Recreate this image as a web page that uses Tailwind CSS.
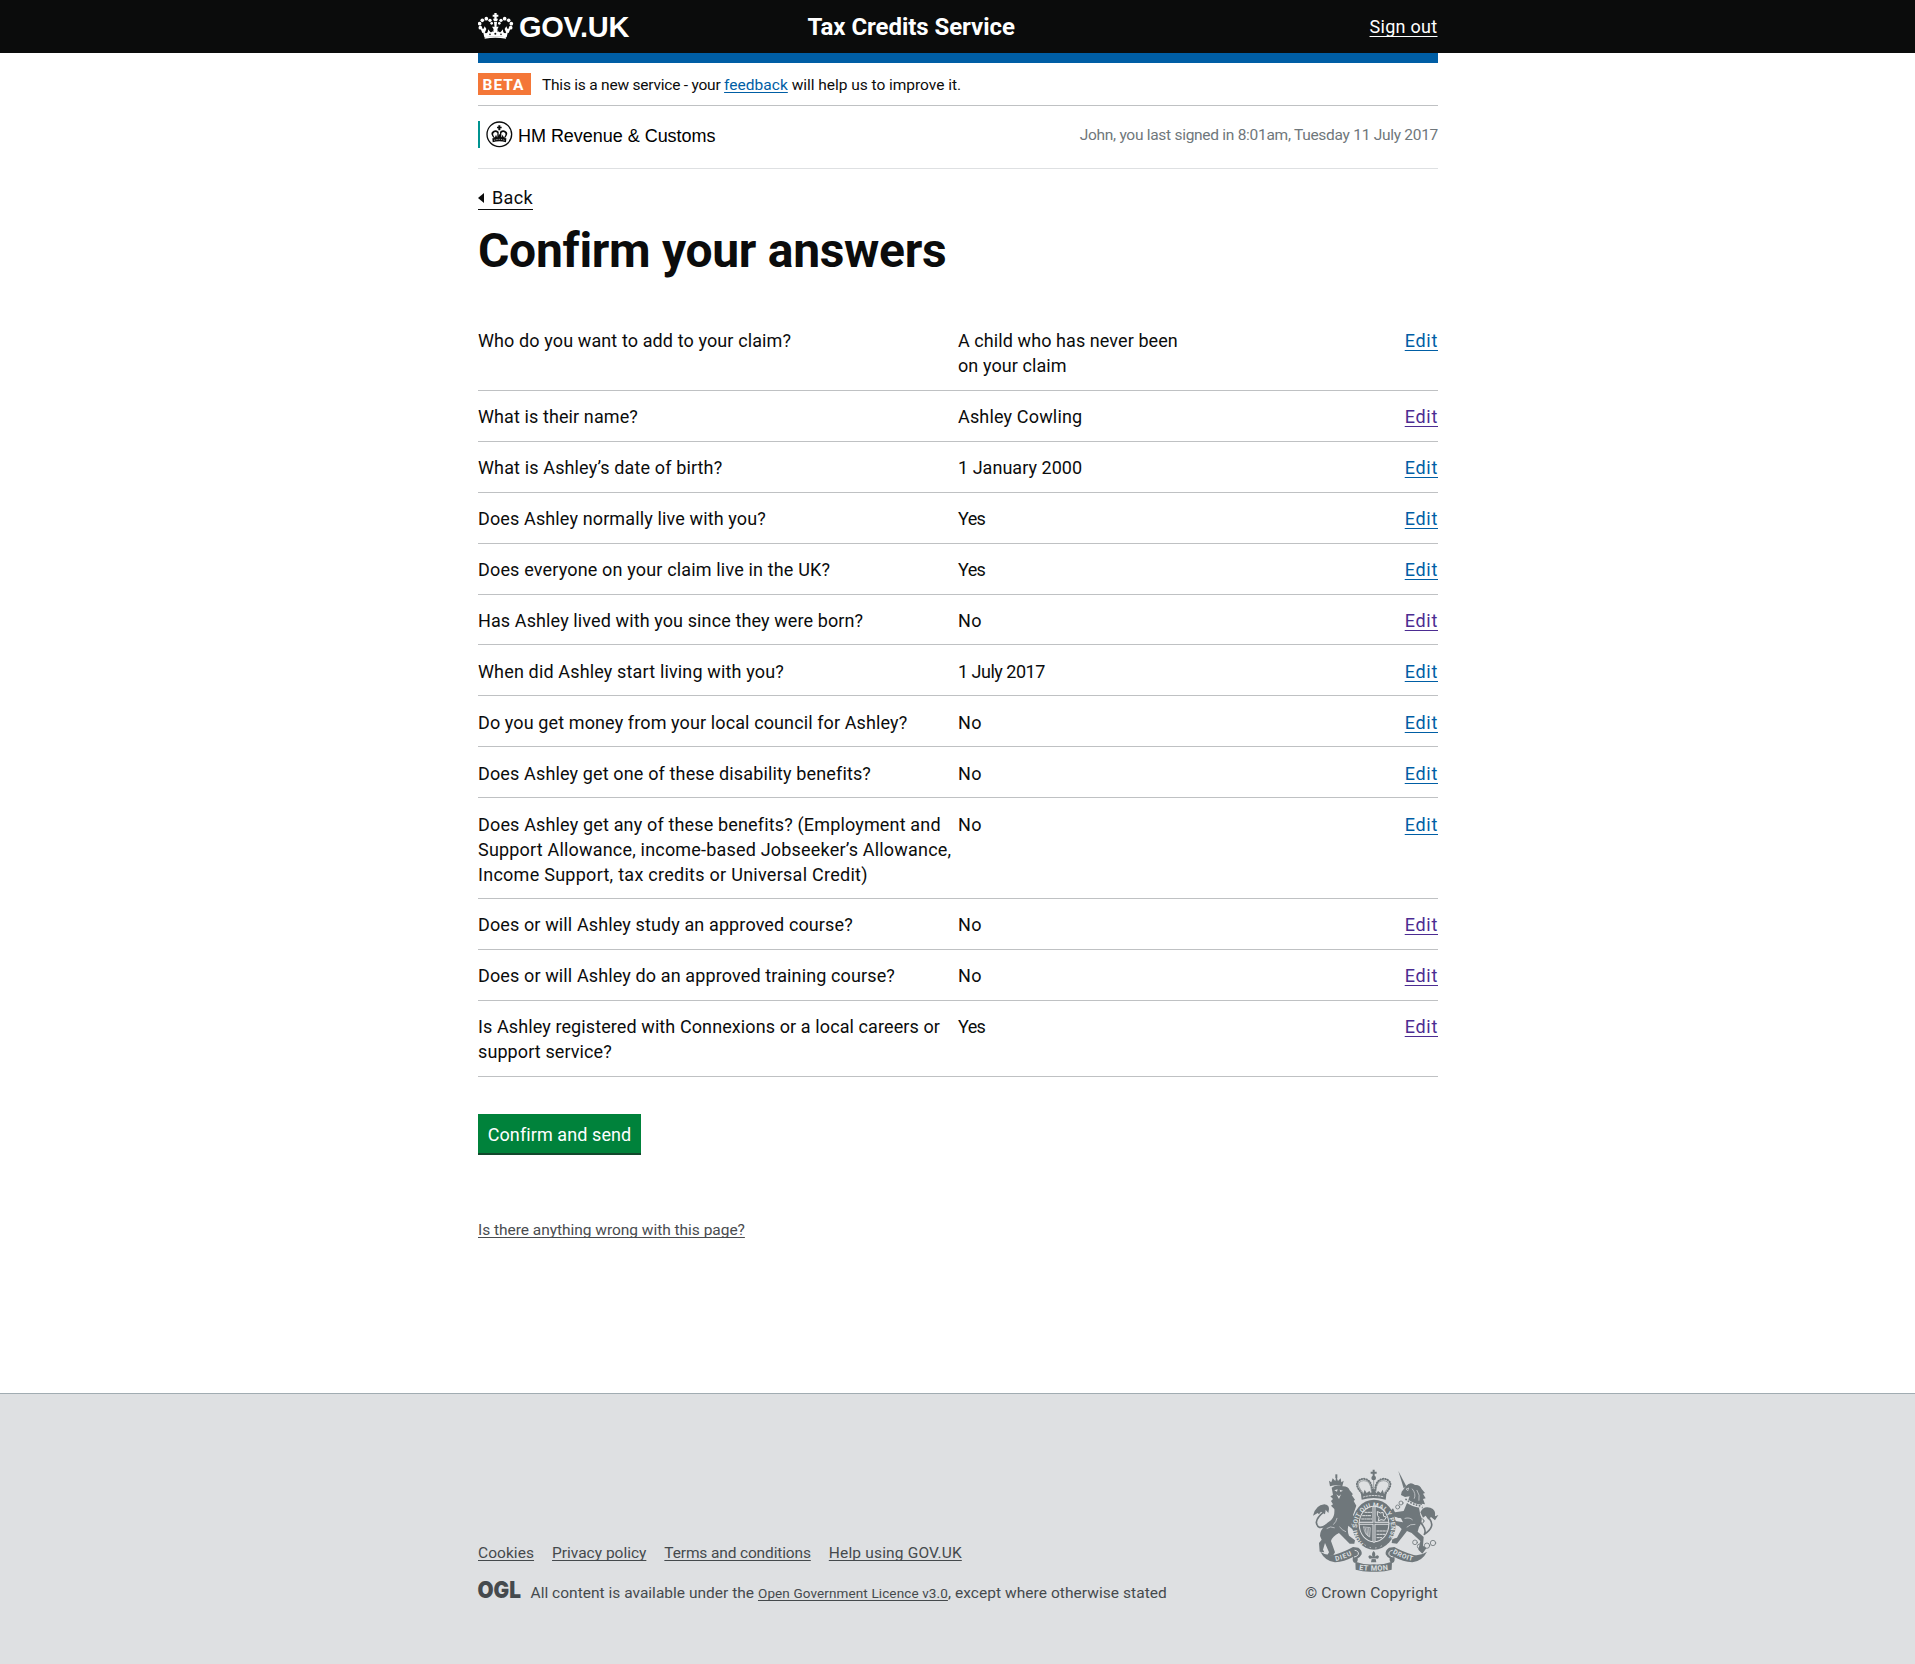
<!DOCTYPE html>
<html lang="en">
<head>
<meta charset="utf-8">
<title>Confirm your answers - Tax Credits Service - GOV.UK</title>
<script src="https://cdn.jsdelivr.net/npm/@tailwindcss/browser@4"></script>
</head>
<body class="flex min-h-screen flex-col bg-white font-['Roboto',sans-serif] text-[18px] leading-[25px] text-[#0b0c0c] decoration-1 [text-decoration-skip-ink:none]">

<header class="h-[53px] bg-[#0b0c0c] text-white">
  <div class="mx-auto flex h-full w-[961px] items-start pl-px">
    <svg class="mt-[12px] shrink-0" width="36" height="30" viewBox="24 36 108 90" fill="#fff">
      <!-- crown -->
      <path d="M38 90 L43 112 Q76 107 110 112 L115 90 L106 100 Q98 100 99 88 L92 96 Q85 99 82 88 L86 80 L66 80 L71 88 Q68 99 61 96 L54 88 Q55 100 47 100Z"/>
      <path d="M44 116 Q76 110 108 116 L108 112 Q76 106 44 112Z"/>
      <path d="M73 39h7v5h5v6h-5v6h4l-3 8 h-9l-3-8h4v-6h-5v-6h5z"/>
      <circle cx="31" cy="83" r="5.5"/><circle cx="29" cy="71" r="5.5"/><circle cx="37" cy="61" r="5.5"/><circle cx="49" cy="56" r="5.5"/><circle cx="60" cy="61" r="5"/><circle cx="65" cy="70" r="4"/>
      <circle cx="122" cy="83" r="5.5"/><circle cx="124" cy="71" r="5.5"/><circle cx="116" cy="61" r="5.5"/><circle cx="104" cy="56" r="5.5"/><circle cx="93" cy="61" r="5"/><circle cx="88" cy="70" r="4"/>
      <path d="M31 84l10 2 3-7 5 8-4 10-8 2zM122 84l-10 2-3-7-5 8 4 10 8 2zM72 66h9l-2 18h-5z"/>
      <g fill="#0b0c0c"><circle cx="60" cy="103" r="2.5"/><circle cx="93" cy="103" r="2.5"/><circle cx="76" cy="101" r="3"/><circle cx="69" cy="93" r="2"/><circle cx="84" cy="93" r="2"/></g>
    </svg>
    <span class="mt-[11px] ml-[4.5px] w-[110px] origin-left scale-x-[0.967] font-['Liberation_Sans',sans-serif] text-[30px] leading-[32px] font-bold tracking-[-0.3px] whitespace-nowrap">GOV.UK</span>
    <p class="mt-[12px] ml-[179px] text-[24px] leading-[30px] font-bold tracking-[-0.055px]">Tax Credits Service</p>
    <a href="#" class="mt-[14px] mr-[0.5px] ml-auto tracking-[0.29px] underline underline-offset-[3px]">Sign out</a>
  </div>
</header>

<div class="mx-auto w-[961px] grow pl-px">
  <div class="h-[10px] bg-[#005ea5]"></div>

  <div class="flex h-[43px] items-start border-b border-[#bfc1c3] pt-[10px] text-[15.5px]">
    <strong class="h-[22px] w-[53px] bg-[#f47738] pl-[4.5px] leading-[24px] font-bold tracking-[1px] text-white">BETA</strong>
    <p class="ml-[11px] leading-[24px]"><span class="tracking-[-0.22px]">This is a new service - your </span><a href="#" class="tracking-[0.03px] text-[#005ea5] underline underline-offset-[2px]">feedback</a><span class="tracking-[-0.03px]"> will help us to improve it.</span></p>
  </div>

  <div class="flex h-[63px] items-start justify-between border-b border-[#dee0e2] pt-[15px]">
    <div class="flex h-[27px] items-center gap-[5px] border-l-2 border-[#009390] pl-[6px] font-['Liberation_Sans',sans-serif] text-black">
      <svg width="27" height="27" viewBox="0 0 81 81" fill="#0b0c0c">
        <circle cx="40" cy="40" r="37" fill="none" stroke="#0b0c0c" stroke-width="4"/>
        <path d="M37 13h6v4h4v5h-4v6h-6v-6h-4v-5h4z"/>
        <path d="M22 50Q13 38 18 33Q27 23 38 32L38 50zM58 50Q67 38 62 33Q53 23 42 32L42 50z" />
        <path d="M25 48Q19 39 23 36Q28 30 34 36L34 48zM55 48Q61 39 57 36Q52 30 46 36L46 48z" fill="#fff"/>
        <path d="M20 64Q40 57 60 64L61 52 54 51 50 41 46 50 40 38 34 50 30 41 26 51 19 52z"/>
        <path d="M24 58Q40 52 56 58" fill="none" stroke="#fff" stroke-width="2" stroke-dasharray="4 3"/>
      </svg>
      <span class="pt-[3px] leading-[25px] tracking-[-0.03px]">HM Revenue &amp; Customs</span>
    </div>
    <p class="mt-[3px] text-[15.5px] leading-[22px] tracking-[-0.28px] text-[#6f777b]">John, you last signed in 8:01am, Tuesday 11 July 2017</p>
  </div>

  <main>
    <a href="#" class="mt-[17px] flex w-[55px] items-center gap-[8px] border-b border-[#0b0c0c] leading-[23px] tracking-[0.38px]">
      <svg class="shrink-0" width="6" height="10" viewBox="0 0 6 10" fill="#0b0c0c"><path d="M6 0v10L0 5z"/></svg>Back</a>
    <h1 class="mt-[15px] text-[48px] leading-[51px] font-bold tracking-[-0.3px]">Confirm your answers</h1>

    <dl class="mt-[39px]">
      <div class="flex h-[76px] border-b border-[#bfc1c3] pt-[13px]">
        <dt class="w-[480px] tracking-[0.11px]">Who do you want to add to your claim?</dt>
        <dd class="tracking-[0.08px]">A child who has never been<br>on your claim</dd>
        <dd class="ml-auto"><a href="#" class="tracking-[0.7px] text-[#005ea5] underline underline-offset-[3px]">Edit</a></dd>
      </div>
      <div class="flex h-[51px] border-b border-[#bfc1c3] pt-[13px]">
        <dt class="w-[480px] tracking-[0.1px]">What is their name?</dt>
        <dd class="tracking-[0.16px]">Ashley Cowling</dd>
        <dd class="ml-auto"><a href="#" class="tracking-[0.7px] text-[#4c2c92] underline underline-offset-[3px]">Edit</a></dd>
      </div>
      <div class="flex h-[51px] border-b border-[#bfc1c3] pt-[13px]">
        <dt class="w-[480px] tracking-[0.136px]">What is Ashley’s date of birth?</dt>
        <dd class="tracking-[0.03px]">1 January 2000</dd>
        <dd class="ml-auto"><a href="#" class="tracking-[0.7px] text-[#005ea5] underline underline-offset-[3px]">Edit</a></dd>
      </div>
      <div class="flex h-[51px] border-b border-[#bfc1c3] pt-[13px]">
        <dt class="w-[480px] tracking-[0.13px]">Does Ashley normally live with you?</dt>
        <dd class="tracking-[-0.6px]">Yes</dd>
        <dd class="ml-auto"><a href="#" class="tracking-[0.7px] text-[#005ea5] underline underline-offset-[3px]">Edit</a></dd>
      </div>
      <div class="flex h-[51px] border-b border-[#bfc1c3] pt-[13px]">
        <dt class="w-[480px] tracking-[0.16px]">Does everyone on your claim live in the UK?</dt>
        <dd class="tracking-[-0.6px]">Yes</dd>
        <dd class="ml-auto"><a href="#" class="tracking-[0.7px] text-[#005ea5] underline underline-offset-[3px]">Edit</a></dd>
      </div>
      <div class="flex h-[50px] border-b border-[#bfc1c3] pt-[13px]">
        <dt class="w-[480px] tracking-[0.11px]">Has Ashley lived with you since they were born?</dt>
        <dd class="tracking-[0.45px]">No</dd>
        <dd class="ml-auto"><a href="#" class="tracking-[0.7px] text-[#4c2c92] underline underline-offset-[3px]">Edit</a></dd>
      </div>
      <div class="flex h-[51px] border-b border-[#bfc1c3] pt-[14px]">
        <dt class="w-[480px] tracking-[0.15px]">When did Ashley start living with you?</dt>
        <dd class="tracking-[-0.5px]">1 July 2017</dd>
        <dd class="ml-auto"><a href="#" class="tracking-[0.7px] text-[#005ea5] underline underline-offset-[3px]">Edit</a></dd>
      </div>
      <div class="flex h-[51px] border-b border-[#bfc1c3] pt-[14px]">
        <dt class="w-[480px] tracking-[0.11px]">Do you get money from your local council for Ashley?</dt>
        <dd class="tracking-[0.45px]">No</dd>
        <dd class="ml-auto"><a href="#" class="tracking-[0.7px] text-[#005ea5] underline underline-offset-[3px]">Edit</a></dd>
      </div>
      <div class="flex h-[51px] border-b border-[#bfc1c3] pt-[14px]">
        <dt class="w-[480px] tracking-[0.14px]">Does Ashley get one of these disability benefits?</dt>
        <dd class="tracking-[0.45px]">No</dd>
        <dd class="ml-auto"><a href="#" class="tracking-[0.7px] text-[#005ea5] underline underline-offset-[3px]">Edit</a></dd>
      </div>
      <div class="flex h-[101px] border-b border-[#bfc1c3] pt-[14px]">
        <dt class="w-[480px] tracking-[0.157px]">Does Ashley get any of these benefits? (Employment and<br><span class="tracking-[0.19px]">Support Allowance, income-based Jobseeker’s Allowance,</span><br><span class="tracking-[0.27px]">Income Support, tax credits or Universal Credit)</span></dt>
        <dd class="tracking-[0.45px]">No</dd>
        <dd class="ml-auto"><a href="#" class="tracking-[0.7px] text-[#005ea5] underline underline-offset-[3px]">Edit</a></dd>
      </div>
      <div class="flex h-[51px] border-b border-[#bfc1c3] pt-[13px]">
        <dt class="w-[480px] tracking-[0.12px]">Does or will Ashley study an approved course?</dt>
        <dd class="tracking-[0.45px]">No</dd>
        <dd class="ml-auto"><a href="#" class="tracking-[0.7px] text-[#4c2c92] underline underline-offset-[3px]">Edit</a></dd>
      </div>
      <div class="flex h-[51px] border-b border-[#bfc1c3] pt-[13px]">
        <dt class="w-[480px] tracking-[0.124px]">Does or will Ashley do an approved training course?</dt>
        <dd class="tracking-[0.45px]">No</dd>
        <dd class="ml-auto"><a href="#" class="tracking-[0.7px] text-[#4c2c92] underline underline-offset-[3px]">Edit</a></dd>
      </div>
      <div class="flex h-[76px] border-b border-[#bfc1c3] pt-[13px]">
        <dt class="w-[480px] tracking-[0.1px]">Is Ashley registered with Connexions or a local careers or<br>support service?</dt>
        <dd class="tracking-[-0.6px]">Yes</dd>
        <dd class="ml-auto"><a href="#" class="tracking-[0.7px] text-[#4c2c92] underline underline-offset-[3px]">Edit</a></dd>
      </div>
    </dl>

    <button class="mt-[37px] block h-[41px] w-[163px] border-b-2 border-[#12482c] bg-[#00823b] pt-[2px] leading-[38px] tracking-[0.09px] text-white">Confirm and send</button>
    <a href="#" class="mt-[65px] block text-[15.5px] leading-[20px] tracking-[-0.03px] text-[#494c4f] underline underline-offset-[2px]">Is there anything wrong with this page?</a>
  </main>
</div>

<footer class="h-[271px] border-t border-[#a1acb2] bg-[#dee0e2] pt-[75px] text-[15.5px] leading-[20px] text-[#454a4d]">
  <div class="mx-auto flex w-[961px] items-end justify-between pl-px">
    <div>
      <ul class="flex gap-[18px]">
        <li><a href="#" class="tracking-[0.06px] underline underline-offset-[2px]">Cookies</a></li>
        <li><a href="#" class="tracking-[-0.01px] underline underline-offset-[2px]">Privacy policy</a></li>
        <li><a href="#" class="tracking-[-0.14px] underline underline-offset-[2px]">Terms and conditions</a></li>
        <li><a href="#" class="tracking-[0.17px] underline underline-offset-[2px]">Help using GOV.UK</a></li>
      </ul>
      <div class="mt-[20px] flex">
        <svg class="-mt-[6px] mr-[8.5px] overflow-visible" width="44" height="26" viewBox="0 0 44 26" fill="#454a4d"><text x="-0.5" y="21" font-family="Inter, sans-serif" font-weight="900" font-size="23" textLength="43.5" lengthAdjust="spacingAndGlyphs">OGL</text></svg>
        <p><span class="tracking-[0.017px]">All content is available under the </span><a href="#" class="text-[13.5px] tracking-[0.12px] underline underline-offset-[2px]">Open Government Licence v3.0</a><span class="tracking-[0.055px]">, except where otherwise stated</span></p>
      </div>
    </div>
    <div class="flex flex-col items-end">
      <svg class="overflow-visible" width="126" height="103" viewBox="67 40 378 309" fill="#6f777b" stroke-linecap="round" stroke-linejoin="round">
        <!-- lion -->
        <path d="M121 92L118 75l7 5 4-12 8 8 3-13 5 13 8-8 2 12 7-5-4 17Q140 86 121 92z"/>
        <path d="M137 56h6v12h-6z"/>
        <path d="M126 96Q140 86 160 92Q176 92 180 104L190 116 186 118 196 132 192 136 200 150 190 178 204 196 196 206 184 204Q194 212 190 222L176 210Q172 226 178 240L196 254 194 264 180 264 160 244 148 232Q128 242 124 256L136 290 130 300H112L118 290 106 262 100 282 104 290 90 288 88 262 96 252Q88 240 94 226Q104 206 124 194Q136 182 134 160L124 150 130 146 124 136 130 130 122 122 130 118z"/>
        <path d="M94 240Q116 224 110 208Q84 226 80 200Q82 184 104 168" fill="none" stroke="#6f777b" stroke-width="5"/>
        <path d="M70 180Q78 148 104 146Q124 148 116 172L108 162 106 176 94 168 88 176 84 172z"/>
        <path d="M134 104l10-3-2 7zM150 102l10 3-8 4zM140 116l8 6 6-6-6 14z" fill="#dee0e2"/>
        <path d="M132 206Q140 198 142 188M150 214Q158 224 168 228M112 218Q122 210 134 216" fill="none" stroke="#dee0e2" stroke-width="2"/>
        <!-- unicorn -->
        <path d="M326 46L350 92 342 98z"/>
        <path d="M350 90Q362 76 376 88Q390 86 396 100L406 112 400 114 408 128 400 130 406 146 396 144 400 158 388 156 392 178Q402 196 388 214L384 228 402 244 400 270 410 278 398 294 386 282 392 256 366 232 352 226 338 244 322 264 306 262 308 250 322 246 336 220 328 212 308 204 302 190 312 184 318 196 340 200 334 188 302 180 300 168 310 158 316 170 342 166 352 142 360 122 346 124 334 118 336 108z"/>
        <path d="M392 200Q412 222 404 236Q438 214 420 190" fill="none" stroke="#6f777b" stroke-width="5"/>
        <path d="M392 170Q400 150 422 156Q440 162 436 182L446 178 436 194 424 184 416 192 408 180 400 186z"/>
        <path d="M348 132Q366 148 394 152" fill="none" stroke="#dee0e2" stroke-width="10"/>
        <path d="M349 131Q366 146 392 151" fill="none" stroke="#6f777b" stroke-width="5" stroke-dasharray="1 8"/>
        <path d="M350 100l7-3-2 7zM368 100q12 14 6 28M382 104q10 14 6 30M346 188q14-4 22 4M352 214q10-10 24-8" fill="none" stroke="#dee0e2" stroke-width="2"/>
        <g fill="none" stroke="#6f777b" stroke-width="2.5"><circle cx="334" cy="142" r="6"/><circle cx="324" cy="154" r="6"/><circle cx="328" cy="180" r="6"/><circle cx="396" cy="196" r="7"/><circle cx="376" cy="260" r="7"/><circle cx="390" cy="272" r="7"/><circle cx="412" cy="270" r="8"/><circle cx="430" cy="262" r="8"/></g>
        <!-- crown -->
        <path d="M249 42h6v6h6v6h-6v7h-6v-7h-6v-6h6z"/><circle cx="252" cy="67" r="7"/>
        <g fill="none" stroke="#6f777b" stroke-width="6" stroke-dasharray="1.5 6"><path d="M216 112Q194 88 206 76Q222 62 240 78Q248 90 248 110M288 112Q310 88 298 76Q282 62 264 78Q256 90 256 110"/></g>
        <g fill="none" stroke="#6f777b" stroke-width="1.8"><path d="M219 110Q200 88 209 80Q222 70 237 80Q245 90 246 110M285 110Q304 88 295 80Q282 70 267 80Q259 90 258 110M252 74v30"/></g>
        <path d="M216 132L213 108l8 6 4-12 6 10 8-6 5 7 8-15 8 15 5-7 8 6 6-10 4 12 8-6-3 24Q252 122 216 132z"/>
        <path d="M221 124Q252 115 283 124" fill="none" stroke="#dee0e2" stroke-width="2.5" stroke-dasharray="5 4"/>
        <!-- garter and shield -->
        <ellipse cx="253" cy="207" rx="65" ry="75"/>
        <ellipse cx="253" cy="205" rx="46" ry="55" fill="#dee0e2"/>
        <ellipse cx="253" cy="205" rx="43" ry="52"/>
        <path d="M253 154v103M211 203h84" stroke="#dee0e2" stroke-width="9"/><path d="M253 154v103M211 203h84" stroke="#6f777b" stroke-width="3"/>
        <g fill="none" stroke="#dee0e2" stroke-width="3" stroke-dasharray="7 3 4 3"><path d="M226 170h20M219 180h27M216 190h30M262 226h28M262 236h24M262 246h14"/></g>
        <path d="M264 168l8 4 8-2 2 12 8 2-6 10-10-2-8 4 2-10-4-6z" fill="none" stroke="#dee0e2" stroke-width="3"/>
        <path d="M222 214l20 2-2 28q-16-8-18-30M227 218l3 18M232 218l2 22M237 218l1 24" fill="none" stroke="#dee0e2" stroke-width="2"/>
        <path id="garter" d="M222 264A51 61 0 1 1 284 264" fill="none"/>
        <text font-family="Roboto, sans-serif" font-weight="700" font-size="19" fill="#dee0e2"><textPath href="#garter" textLength="262">HONI SOIT QUI MAL Y PENSE</textPath></text>
        <path d="M226 268Q253 286 280 268" fill="none" stroke="#dee0e2" stroke-width="3" stroke-dasharray="1 16"/>
        <!-- motto ribbon -->
        <path d="M92 288Q112 302 132 298Q166 288 190 274L206 276Q218 284 216 296Q212 304 204 308Q206 320 196 322Q186 318 190 304Q164 318 136 320Q106 316 92 288z"/>
        <path d="M412 288Q392 302 372 298Q338 288 314 274L298 276Q286 284 288 296Q292 304 300 308Q298 320 308 322Q318 318 314 304Q340 318 368 320Q398 316 412 288z"/>
        <path d="M197 318Q224 328 252 326Q280 328 307 318L306 342Q280 350 252 348Q224 350 198 342z"/>
        <path d="M196 284q12 2 10 12-4 8-12 8M308 284q-12 2-10 12 4 8 12 8" fill="none" stroke="#dee0e2" stroke-width="3"/>
        <path id="motto-left" d="M138 316Q166 310 192 296" fill="none"/><path id="motto-mid" d="M208 342Q252 349 300 342" fill="none"/><path id="motto-right" d="M309 292Q336 309 374 317" fill="none"/>
        <g font-family="Roboto, sans-serif" font-weight="700" font-size="20" fill="#dee0e2">
          <text><textPath href="#motto-left" textLength="52">DIEU</textPath></text>
          <text font-size="22"><textPath href="#motto-mid" textLength="88">ET MON</textPath></text>
          <text><textPath href="#motto-right" textLength="64">DROIT</textPath></text>
        </g>
        <path d="M252 286q8 8 3 17 10-9 13 0-1 8-10 7l2 10h-16l2-10q-9 1-10-7 3-9 13 0-5-9 3-17z"/>
        <path d="M244 309h16" stroke="#dee0e2" stroke-width="2"/>
      </svg>
      <p class="mt-[11px] tracking-[0.16px]">© Crown Copyright</p>
    </div>
  </div>
</footer>
</body>
</html>
